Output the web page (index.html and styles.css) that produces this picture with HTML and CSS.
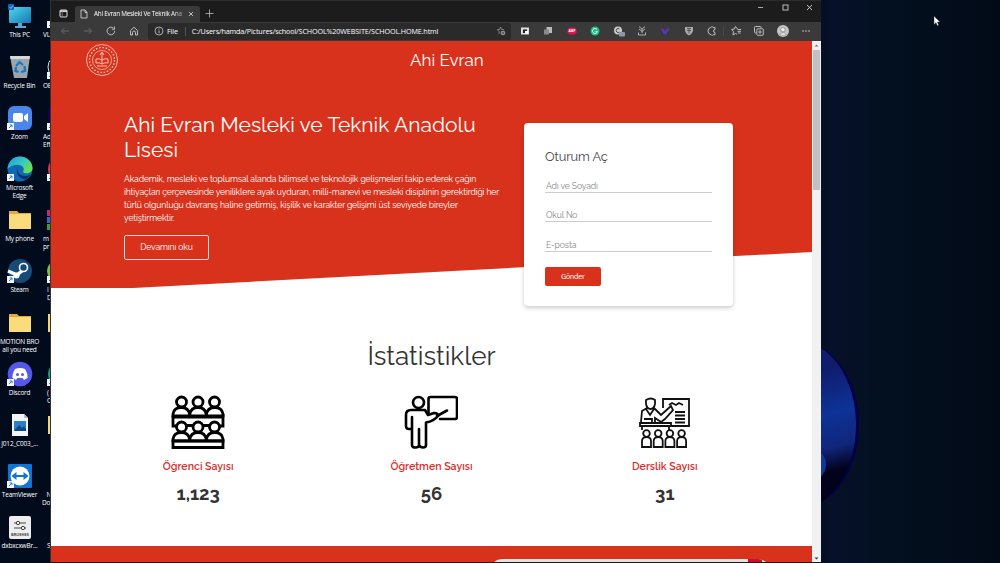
FILE: index.html
```html
<!DOCTYPE html>
<html lang="tr">
<head>
  <title>Ahi Evran Mesleki Ve Teknik Anadolu Lisesi</title>
  <meta charset="UTF-8">
  <link rel="stylesheet" href="styles.css">
</head>
<body>
<div class="desktop">
  <div class="bloom"><div class="petal"></div></div>

  <div class="icons">
    <div class="icon"><svg width="28" height="26" viewBox="0 0 28 26"><defs><linearGradient id="scr" x2="1" y2="1"><stop stop-color="#4fd8e8"/><stop offset="1" stop-color="#1477b8"/></linearGradient></defs><path d="M12 19h4v4h4v2H9v-2h3z" fill="#57a9d0"/><rect x="3" y="4" width="22" height="16" rx="1" fill="url(#scr)"/><rect x="2" y="1" width="6" height="6" rx="1" fill="#1467b8"/><path d="M3.500 4l1.500 1.500 2-3" stroke="#9cf" fill="none" stroke-width=".8"/></svg><span>This PC</span></div>
    <div class="icon"><svg width="28" height="26" viewBox="0 0 28 26"><path d="M4 2h20l-3 22H8z" fill="#9ba5ad"/><path d="M4 2h20l-.5 3h-19z" fill="#d2d8dc"/><path d="M10 12l3.500-4 3.500 3M18.500 12l.5 5-4 1M12.500 18l-3-1 .5-4" stroke="#1878c8" stroke-width="2.300" fill="none"/></svg><span>Recycle Bin</span></div>
    <div class="icon"><svg width="28" height="26" viewBox="0 0 28 26"><rect x="2" y="1" width="24" height="24" rx="6" fill="#4a86ea"/><rect x="7" y="8" width="10" height="9" rx="2" fill="#fff"/><path d="M18 11l4-3v9l-4-3z" fill="#fff"/><use href="#lnk"/></svg><span>Zoom</span></div>
    <div class="icon"><svg width="28" height="26" viewBox="0 0 28 26"><defs><linearGradient id="edge" x2="1" y2=".6"><stop stop-color="#1d9ee0"/><stop offset=".6" stop-color="#35c9c0"/><stop offset="1" stop-color="#6be04c"/></linearGradient></defs><circle cx="14" cy="13" r="12.500" fill="#1067b4"/><path d="M1.500 13C2 5 8 .5 14 .5S26.500 5 26.500 12c0 4-4 6-8 5-3-1 0-2-1-5-1-4-10-5-16 1z" fill="url(#edge)"/><path d="M12 11c-2 5 2 9 7 9 2 0 4-.5 5.500-1.500-1 2-3 4-5 5-6-1-11-6-7.500-12.500z" fill="#0c2f6b"/><use href="#lnk"/></svg><span>Microsoft<br>Edge</span></div>
    <div class="icon"><svg width="28" height="26" viewBox="0 0 28 26"><use href="#folder"/></svg><span>My phone</span></div>
    <div class="icon"><svg width="28" height="26" viewBox="0 0 28 26"><circle cx="14" cy="13" r="12" fill="#164a78"/><path d="M2 13l9 4 6-5" stroke="#fff" stroke-width="3.500" fill="none"/><circle cx="17.500" cy="9.500" r="4" fill="#164a78" stroke="#fff" stroke-width="1.600"/><circle cx="10.500" cy="17.500" r="3" fill="#fff"/><use href="#lnk"/></svg><span>Steam</span></div>
    <div class="icon"><svg width="28" height="26" viewBox="0 0 28 26"><use href="#folder"/></svg><span>MOTION BRO<br>all you need</span></div>
    <div class="icon"><svg width="28" height="26" viewBox="0 0 28 26"><circle cx="14" cy="13" r="12.300" fill="#5459e8"/><path d="M9 8q5-2 10 0 3 5 2.500 9l-3.500 2-1.500-2h-5L10 19l-3.500-2Q6 13 9 8z" fill="#fff"/><circle cx="11.500" cy="13.500" r="1.500" fill="#5459e8"/><circle cx="16.500" cy="13.500" r="1.500" fill="#5459e8"/><use href="#lnk"/></svg><span>Discord</span></div>
    <div class="icon"><svg width="28" height="26" viewBox="0 0 28 26"><path d="M6 2h12l4 4v18H6z" fill="#f4f5f7"/><path d="M18 2v4h4z" fill="#b9bec5"/><rect x="8" y="9" width="12" height="10" fill="#2b7fc9"/><path d="M8 19l5-6 3 3 2-2 2 3v2z" fill="#0f4a86"/></svg><span>J012_C003_...</span></div>
    <div class="icon"><svg width="28" height="26" viewBox="0 0 28 26"><rect x="2" y="1" width="24" height="24" rx="1" fill="#1173d4"/><circle cx="14" cy="13" r="9.500" fill="#fff"/><path d="M5.500 13l5-4v3h7V9l5 4-5 4v-3h-7v3z" fill="#1173d4"/><use href="#lnk"/></svg><span>TeamViewer</span></div>
    <div class="icon"><svg width="28" height="26" viewBox="0 0 28 26"><rect x="3" y="2" width="22" height="23" rx="2" fill="#eee"/><path d="M8 9h12M8 14h12" stroke="#444"/><circle cx="12" cy="9" r="1.700" fill="#eee" stroke="#444"/><circle cx="17" cy="14" r="1.700" fill="#eee" stroke="#444"/><text x="14" y="22" class="brush">BRUSHES</text></svg><span>dxbxcxwBr...</span></div>
  </div>

  <div class="icons second">
    <div class="icon"><svg width="8" height="26" viewBox="0 0 8 26"><use href="#lnk" x="4"/></svg><span>VL</span></div>
    <div class="icon"><svg width="8" height="26" viewBox="0 0 8 26"><circle cx="18" cy="13" r="12" fill="#111" stroke="#ddd"/><use href="#lnk" x="4"/></svg><span>OB</span></div>
    <div class="icon"><svg width="8" height="26" viewBox="0 0 8 26"><rect x="6" y="1" width="24" height="24" rx="4" fill="#10004f"/><use href="#lnk" x="4"/></svg><span>Ad<br>Eff</span></div>
    <div class="icon"><svg width="8" height="26" viewBox="0 0 8 26"><circle cx="18" cy="13" r="12" fill="#e6395a"/><use href="#lnk" x="4"/></svg></div>
    <div class="icon"><svg width="8" height="26" viewBox="0 0 8 26"><path d="M5 3h6v6H5z" fill="#c22a6a"/><path d="M5 10h6v6H5z" fill="#3c66c8"/><path d="M5 17h6v6H5z" fill="#3b9c3a"/></svg><span>m<br>pr</span></div>
    <div class="icon"><svg width="8" height="26" viewBox="0 0 8 26"><circle cx="16" cy="13" r="11" fill="#7bc043"/><use href="#lnk" x="4"/></svg><span class="in">I<br>D</span></div>
    <div class="icon"><svg width="8" height="26" viewBox="0 0 8 26"><rect x="6" y="4" width="10" height="18" fill="#f2d67c"/></svg></div>
    <div class="icon"><svg width="8" height="26" viewBox="0 0 8 26"><circle cx="18" cy="13" r="12" fill="#1fa37a"/><use href="#lnk" x="4"/></svg><span class="in">(<br>C</span></div>
    <div class="icon"><svg width="8" height="26" viewBox="0 0 8 26"><rect x="6" y="4" width="10" height="18" fill="#f2d67c"/></svg></div>
    <div class="icon"><svg width="8" height="26" viewBox="0 0 8 26"></svg><span class="out">&nbsp;&nbsp;&nbsp;N<br>Do</span></div>
    <div class="icon"><svg width="8" height="26" viewBox="0 0 8 26"></svg><span class="in">S</span></div>
  </div>

  <div class="window">
    <div class="titlebar">
      <svg class="tabs-btn" width="9" height="9" viewBox="0 0 9 9"><rect x="1" y="1" width="7" height="7" rx="1" fill="none" stroke="#ddd"/><path d="M1 2.200h7" stroke="#ddd" stroke-width="1.600"/><path d="M3.200 2v6" stroke="#999" stroke-width=".7"/></svg>
      <div class="tab">
        <svg width="8" height="10" viewBox="0 0 8 10"><path d="M1 1h4l2 2.500V9H1zM5 1v2.500h2" fill="none" stroke="#ddd" stroke-width=".8"/></svg>
        <span>Ahi Evran Mesleki Ve Teknik Ana</span>
        <svg class="x" width="6" height="6" viewBox="0 0 6 6"><path d="M1 1l4 4M5 1L1 5" stroke="#ddd" stroke-width=".8"/></svg>
      </div>
      <svg class="plus" width="9" height="9" viewBox="0 0 9 9"><path d="M4.500 .5v8M.5 4.500h8" stroke="#bbb" stroke-width=".8"/></svg>
      <div class="controls">
        <svg width="7" height="7" viewBox="0 0 7 7"><path d="M1 3.500h5" stroke="#ccc" stroke-width=".8"/></svg>
        <svg width="7" height="7" viewBox="0 0 7 7"><rect x="1" y="1" width="5" height="5" fill="none" stroke="#ccc" stroke-width=".9"/></svg>
        <svg width="7" height="7" viewBox="0 0 7 7"><path d="M1 1l5 5M6 1L1 6" stroke="#ddd" stroke-width=".9"/></svg>
      </div>
    </div>

    <div class="toolbar">
      <div class="nav">
        <svg width="10" height="10" viewBox="0 0 10 10"><path d="M9 5H1.500M4.500 2l-3 3 3 3" fill="none" stroke="#686868"/></svg>
        <svg width="10" height="10" viewBox="0 0 10 10"><path d="M1 5h7.500M5.500 2l3 3-3 3" fill="none" stroke="#686868"/></svg>
        <svg width="10" height="10" viewBox="0 0 10 10"><path d="M8.700 5A3.800 3.800 0 1 1 7.500 2.200M8.500.5v2.800H5.700" fill="none" stroke="#ccc" stroke-width=".9"/></svg>
        <svg width="10" height="10" viewBox="0 0 10 10"><path d="M1.500 4.500L5 1.300l3.500 3.200V9h-2V6.500a1.500 1.500 0 0 0-3 0V9h-2z" fill="none" stroke="#ccc" stroke-width=".9"/></svg>
      </div>
      <div class="address">
        <svg width="10" height="10" viewBox="0 0 10 10"><circle cx="5" cy="5" r="4" fill="none" stroke="#ccc" stroke-width=".8"/><path d="M5 4.500v2.800M5 2.600v1" stroke="#ccc" stroke-width=".9"/></svg>
        <span class="scheme">File</span>
        <span class="url">C:/Users/hamda/Pictures/school/SCHOOL%20WEBSITE/SCHOOL.HOME.html</span>
        <svg class="fav" width="10" height="10" viewBox="0 0 10 10"><path d="M4.500 1l1 2.500 2.500.2M3 8l.4-2.500L1.200 3.700l2.400-.3 1-2.400" fill="none" stroke="#999" stroke-width=".8"/><circle cx="7" cy="7" r="2.300" fill="#999"/><path d="M7 5.800v2.400M5.800 7h2.400" stroke="#2a2a2a" stroke-width=".6"/></svg>
      </div>
      <div class="ext">
        <svg width="12" height="12" viewBox="0 0 12 12"><rect x="2" y="2.500" width="8" height="7" fill="#ddd"/><rect x="4" y="4.500" width="4" height="3.500" fill="#222"/><path d="M6 6h3v2.500H6z" fill="#fff"/></svg>
        <svg width="12" height="12" viewBox="0 0 12 12"><rect x="4.500" y="2" width="5.500" height="6" fill="#bbb"/><rect x="2" y="4.500" width="5" height="5" fill="#8a8a8a"/></svg>
        <svg width="12" height="12" viewBox="0 0 12 12"><path d="M3.500 2.500h5L10.500 4.500v3L8.500 9.500h-5L1.500 7.500v-3z" fill="#e0124f"/><text x="6" y="7.300" class="abp">ABP</text></svg>
        <svg width="12" height="12" viewBox="0 0 12 12"><circle cx="6" cy="6" r="4.500" fill="#18c08a"/><path d="M8 4.500A2.500 2.500 0 1 0 8.400 6.600H6.500" fill="none" stroke="#fff" stroke-width=".9"/></svg>
        <svg width="12" height="12" viewBox="0 0 12 12"><circle cx="5" cy="5.500" r="4" fill="#ccc"/><path d="M6.500 4a2 2 0 1 0 0 3" fill="none" stroke="#444"/><rect x="6" y="7" width="6" height="4.500" rx="1" fill="#8d95ad"/></svg>
        <svg width="12" height="12" viewBox="0 0 12 12"><path d="M3 1.500L6 4l3-2.500M3 4l3 2.500L9 4M6 4v4M2.500 7.500V10h7V7.500" fill="none" stroke="#bbb" stroke-width=".9"/></svg>
        <svg width="12" height="12" viewBox="0 0 12 12"><path d="M1.500 3.500h3l1.500 3 1.500-3h3L7 9.500H5z" fill="#5a35b5"/></svg>
        <svg width="12" height="12" viewBox="0 0 12 12"><path d="M2 2h8v4q-1 3-4 4.500Q3 9 2 6z" fill="#aaa"/><path d="M4 3.500h4M4 5.500h4M6 3.500v5" stroke="#444" stroke-width=".8"/></svg>
        <svg width="12" height="12" viewBox="0 0 12 12"><path d="M9 4.500V2.500H7.200a1.300 1.300 0 0 0-2.400 0Q2 3 2 6t3 3.700a1.300 1.300 0 0 0 2.200 0H9V7.500a1.500 1.500 0 0 1 0-3z" fill="none" stroke="#ccc" stroke-width=".9"/></svg>
        <i class="sep"></i>
        <svg width="12" height="12" viewBox="0 0 12 12"><path d="M7.500 4L5.500 1.500 4.300 4 1.500 4.500l2 2L3 10l2.500-1.500L7 9.200M7.500 4.500h3.500M7.500 6.300h3.500M8 8h2.500" fill="none" stroke="#ccc" stroke-width=".9"/></svg>
        <svg width="12" height="12" viewBox="0 0 12 12"><path d="M3 8H2.500a1 1 0 0 1-1-1V2.500a1 1 0 0 1 1-1H7a1 1 0 0 1 1 1V3" fill="none" stroke="#ccc" stroke-width=".9"/><rect x="3.800" y="3.800" width="6.500" height="6.500" rx="1" fill="none" stroke="#ccc" stroke-width=".9"/><path d="M7 5.300v3.500M5.300 7h3.500" stroke="#ccc" stroke-width=".9"/></svg>
        <svg width="12" height="12" viewBox="0 0 12 12"><circle cx="6" cy="6" r="6" fill="#c4c4c4"/><circle cx="6" cy="4.700" r="2.200" fill="#eee" stroke="#777" stroke-width=".7"/><path d="M2.500 9.500Q6 6 9.500 9.500 6 11.500 2.500 9.500z" fill="#eee" stroke="#888" stroke-width=".6"/></svg>
        <svg width="12" height="12" viewBox="0 0 12 12"><circle cx="3" cy="6" r=".8" fill="#ccc"/><circle cx="6" cy="6" r=".8" fill="#ccc"/><circle cx="9" cy="6" r=".8" fill="#ccc"/></svg>
      </div>
    </div>

    <div class="view">
      <div class="page">
        <header class="hero">
          <nav class="topnav">
            <svg class="seal" width="34" height="34" viewBox="0 0 34 34" fill="none" stroke="#f7c0b2"><circle cx="17" cy="17" r="15.500" stroke-width=".9"/><circle cx="17" cy="17" r="12.500" stroke-width="1.400" stroke-dasharray="1.600 1.670"/><circle cx="17" cy="17" r="9.500" stroke-width=".8"/><path d="M11 20q3-1 6 1 3-2 6-1v-4q-3-1-6 1-3-2-6-1zM17 10v11M15 12l2-3 2 3M12 23h10" stroke-width="1"/></svg>
            <span class="brand">Ahi Evran</span>
          </nav>
          <div class="hero-row">
            <div class="intro">
              <h1>Ahi Evran Mesleki ve Teknik Anadolu<br>Lisesi</h1>
              <p>Akademik, mesleki ve toplumsal alanda bilimsel ve teknolojik gelişmeleri takip ederek çağın<br>ihtiyaçları çerçevesinde yeniliklere ayak uyduran, milli-manevi ve mesleki disiplinin gerektirdiği her<br>türlü olgunluğu davranış haline getirmiş, kişilik ve karakter gelişimi üst seviyede bireyler<br>yetiştirmektir.</p>
              <a class="btn-outline">Devamını oku</a>
            </div>
            <form class="login">
              <h2>Oturum Aç</h2>
              <div class="field">Adı ve Soyadı</div>
              <div class="field">Okul No</div>
              <div class="field">E-posta</div>
              <button type="button" class="btn">Gönder</button>
            </form>
          </div>
        </header>

        <section class="stats">
          <h2>İstatistikler</h2>
          <div class="stats-row">
            <div class="stat">
              <svg width="54" height="54" viewBox="0 0 54 54" fill="none" stroke="#000" stroke-width="2.800">
                <path d="M2 20.500h50V31h-5M2 20.500V31h5M2 22h50"/>
                <g id="people" fill="#fff"><circle cx="10.500" cy="7" r="5"/><circle cx="27" cy="7" r="5"/><circle cx="43.500" cy="7" r="5"/><path d="M2 21v-2q1-6.500 8.300-6.500t8.400 7q1.100-7 8.300-7t8.300 7q1.200-7 8.400-7T52 19v2z"/></g>
                <use href="#people" y="25"/>
                <path d="M2 45.800h50v6.700H2z"/><path d="M15 30.500h7M32 30.500h7"/>
              </svg>
              <h3>Öğrenci Sayısı</h3>
              <b>1,123</b>
            </div>
            <div class="stat">
              <svg width="54" height="54" viewBox="0 0 54 54" fill="none" stroke="#000" stroke-width="2.600" stroke-linejoin="round" stroke-linecap="round">
                <circle cx="14.500" cy="7.500" r="5.500"/>
                <path d="M24.500 19V4q0-2 2-2H51q2 0 2 2v18q0 2-2 2H36"/>
                <path d="M7 15h14l3 5 6-2q4 0 4 3-4 5-12 6.500V50q0 2.500-3 2.500T15 50V34M15 50q0 2.500-3.500 2.500T8 50V22M8 34H5q-3 0-3-3V20q0-5 5-5"/>
                <path d="M33 21l10-5.500"/>
              </svg>
              <h3>Öğretmen Sayısı</h3>
              <b>56</b>
            </div>
            <div class="stat">
              <svg width="54" height="54" viewBox="0 0 54 54" fill="none" stroke="#111" stroke-width="1.800">
                <path d="M25 13V4h26v27H32"/>
                <path d="M31 10l3-2 4 2 3-2 4 2M37 17h10M37 20.500h10M37 24h10M37 27.500h10"/>
                <path d="M8 5q5-3 9 0v4q-1 5-4.500 5T8 9zM9 13l-5 3-1 11M16 13l5 5 2 2 10-9 2 4-8 9-4 3-6-4v4M8 14l4 6 4-6M6 24h8v3"/>
                <path d="M2 28h31v3H2zM4 31v4M31 31v4"/>
                <g id="pupil"><circle cx="8.500" cy="38.500" r="3.300"/><path d="M4 52v-6q0-3.800 4.500-3.800T13 46v6z"/></g>
                <use href="#pupil" x="11.700"/><use href="#pupil" x="23.400"/><use href="#pupil" x="35.100"/>
              </svg>
              <h3>Derslik Sayısı</h3>
              <b>31</b>
            </div>
          </div>
        </section>

        <section class="next"><div class="panel"><i></i></div></section>
      </div>

      <div class="scroll">
        <svg width="9" height="9" viewBox="0 0 9 9"><path d="M2.500 5.500l2-2 2 2z" fill="#777"/></svg>
        <div class="thumb"></div>
        <svg class="down" width="9" height="7" viewBox="0 0 9 7"><path d="M2.500 2.500l2 2 2-2z" fill="#333"/></svg>
      </div>
    </div>
  </div>

  <svg class="cursor" width="8" height="12" viewBox="0 0 8 12"><path d="M1 1v8.500l2-1.800 1.300 3 1.400-.6-1.300-3H7z" fill="#fff" stroke="#222" stroke-width=".4"/></svg>
</div>

<!-- shared shapes -->
<svg class="defs" width="0" height="0">
  <defs>
    <g id="lnk"><rect x="1" y="18" width="7" height="7" fill="#f3f7fb"/><path d="M3 23l3-3M3.800 20H6v2.200" stroke="#1a73c9" stroke-width=".9" fill="none"/></g>
    <g id="folder"><path d="M3 4h8l2 2h12v16H3z" fill="#e0aa3c"/><rect x="3" y="7" width="22" height="15" rx="1" fill="#fbdc7d"/></g>
  </defs>
</svg>
</body>
</html>
```
FILE: styles.css
```css
* {box-sizing: border-box;}
body {margin: 0; font-family: Raleway, Lato, sans-serif;}
h1, h2, h3, p {margin: 0; font-weight: 400;}
svg {display: block; flex: none;}
.defs {position: absolute;}

.desktop {
	position: relative;
	width: 1000px;
	height: 563px;
	overflow: hidden;
	background: linear-gradient(90deg, #020b1c 0, #020b1c 80%, #061029 83%, #03101f 89%, #020a17 100%);
}
.bloom {
	position: absolute;
	left: 740px;
	top: 342px;
	width: 119px;
	height: 166px;
	border-radius: 50%;
	overflow: hidden;
	border-right: 3px solid #03004a;
	background: linear-gradient(165deg, #101c6c 25%, #0d3296 48%, #10267c 66%, #02021c 78%);
}
.petal {
	position: absolute;
	right: 30px;
	top: 104px;
	width: 40px;
	height: 37px;
	border-radius: 50%;
	background: #10379c;
}
.cursor {position: absolute; left: 933px; top: 15px;}

/* desktop icons */
.icons {
	position: absolute;
	left: -6px;
	top: 3px;
	width: 51px;
	display: grid;
	grid-auto-rows: 51.1px;
	font: 6.5px/8px "Open Sans", sans-serif;
	letter-spacing: -.2px;
	color: #fff;
	text-align: center;
	white-space: nowrap;
}
.icons.second {left: 42px; width: 8px; text-align: left;}
.icon {display: flex; flex-direction: column; align-items: center; gap: 2px;}
.second .icon {align-items: flex-start;}
.second span {padding-left: 1px;}
.second .in {padding-left: 5px;}
.second .out {margin-left: -1px;}
.brush {font: bold 4px "Open Sans", sans-serif; text-anchor: middle; fill: #444; letter-spacing: 0;}
.abp {font: bold 3.5px "Open Sans", sans-serif; text-anchor: middle; fill: #fff;}

/* browser window */
.window {
	position: absolute;
	left: 50px;
	top: 0;
	width: 771px;
	height: 563px;
	display: flex;
	flex-direction: column;
	background: #1c1c1c;
	border-left: 1px solid #333;
	border-bottom: 1px solid #1a1a1a;
	font-family: "Open Sans", sans-serif;
	color: #fff;
}
.titlebar {height: 22px; display: flex; padding-top: 5px; border-top: 1px solid #2c2c2c;}
.tabs-btn {margin: 3px 7px 0 8px;}
.tab {
	width: 125px;
	height: 17px;
	padding: 0 6px 2px 5px;
	display: flex;
	align-items: center;
	gap: 6px;
	background: #3a3a3a;
	border-radius: 3px 3px 0 0;
	font-size: 6.4px;
	letter-spacing: -.25px;
	white-space: nowrap;
}
.tab span {width: 91px; -webkit-mask-image: linear-gradient(90deg, #000 85%, rgba(0, 0, 0, .3));}
.tab .x {margin-left: -3px;}
.plus {margin: 3px 0 0 5px;}
.controls {margin-left: auto; display: flex; gap: 17.5px; padding: 0 8px 0 0; margin-top: -2px;}
.toolbar {height: 19px; display: flex; align-items: center; padding-bottom: 1px; background: #3a3a3a;}
.nav {display: flex; gap: 13px; padding: 0 9px 0 9px;}
.address {
	width: 363px;
	height: 17px;
	display: flex;
	align-items: center;
	padding: 0 5px 0 6px;
	background: #2a2a2a;
	border-radius: 2px;
	font-size: 7.2px;
	letter-spacing: -.13px;
	white-space: nowrap;
}
.scheme {margin-left: 3px; padding-right: 7px; border-right: 1px solid #555; line-height: 9px;}
.url {margin-left: 6px;}
.fav {margin-left: auto;}
.ext {flex: 1; display: flex; justify-content: space-between; align-items: center; padding: 0 9px 0 8px;}
.sep {width: 1px; height: 10px; margin: 0 -6px; background: #4a4a4a;}

.view {flex: 1; min-height: 0; display: flex; background: #fff;}
.page {flex: 1; overflow: hidden; font-family: Raleway, Lato, sans-serif; color: #333;}
.scroll {width: 9px; display: flex; flex-direction: column; background: #f1f1f1;}
.thumb {height: 140px; margin: 0 1px; background: #c1c1c1;}
.down {margin-top: auto;}

/* school page */
.hero {position: relative; height: 272px; color: #fff;}
.hero::before {
	content: "";
	position: absolute;
	inset: 0;
	background: #d9321c;
	clip-path: polygon(0 0, 100% 0, 100% 211px, 82px 247px, 0 247px);
}
.topnav {position: relative; height: 82px; display: flex; padding: 2px 0 0 34px;}
.brand {margin-left: 291px; font-size: 17px; line-height: 35px;}
.hero-row {position: relative; display: flex; padding-left: 73px;}
.intro {width: 400px; margin-top: -11px;}
.intro h1 {font-size: 21px; line-height: 25px; white-space: nowrap;}
.intro p {margin-top: 11px; font-size: 8.6px; line-height: 13px; letter-spacing: -.12px; white-space: nowrap;}
.btn-outline {
	display: block;
	width: 85px;
	height: 25px;
	margin-top: 10px;
	border: 1px solid #fbd9d2;
	border-radius: 2px;
	font-size: 8.6px;
	line-height: 23px;
	letter-spacing: -.1px;
	text-align: center;
}
.login {
	width: 209px;
	height: 183px;
	padding: 25px 21px 0;
	background: #fff;
	border-radius: 4px;
	box-shadow: 0 2px 4px rgba(0, 0, 0, .2);
	color: #444;
}
.login h2 {font-size: 12.8px; line-height: 17px; letter-spacing: -.1px; margin-bottom: 9px;}
.field {
	height: 19px;
	margin-bottom: 10.3px;
	padding: 0 1px;
	border-bottom: 1px solid #ccc;
	color: #888;
	font-size: 8.6px;
	line-height: 24px;
	letter-spacing: -.1px;
}
.btn {
	display: block;
	width: 56px;
	height: 19px;
	margin-top: 15px;
	padding: 1px 0 0;
	border: 0;
	border-radius: 2px;
	background: #d9321c;
	color: #fff;
	font: 500 6.8px Raleway, Lato, sans-serif;
}

.stats {height: 233px; display: flex; flex-direction: column; align-items: center;}
.stats > h2 {margin-top: 25px; font-size: 26px; line-height: 36px;}
.stats-row {width: 700px; display: grid; grid-template-columns: repeat(3, 1fr); margin-top: 21px;}
.stat {display: flex; flex-direction: column; align-items: center;}
.stat h3 {margin-top: 10px; font-size: 10.6px; line-height: 15px; font-weight: 600; color: #d6302f;}
.stat b {margin-top: 10px; font-size: 18.5px; line-height: 20px; color: #333;}
.next {height: 16px; padding-top: 13px; overflow: hidden; background: #d9321c;}
.panel {width: 280px; height: 30px; margin-left: 439px; border-radius: 12px; overflow: hidden; background: #e4e4e4;}
.panel i {display: block; width: 14px; height: 30px; margin-left: 258px; background: #c8102e;}
```
